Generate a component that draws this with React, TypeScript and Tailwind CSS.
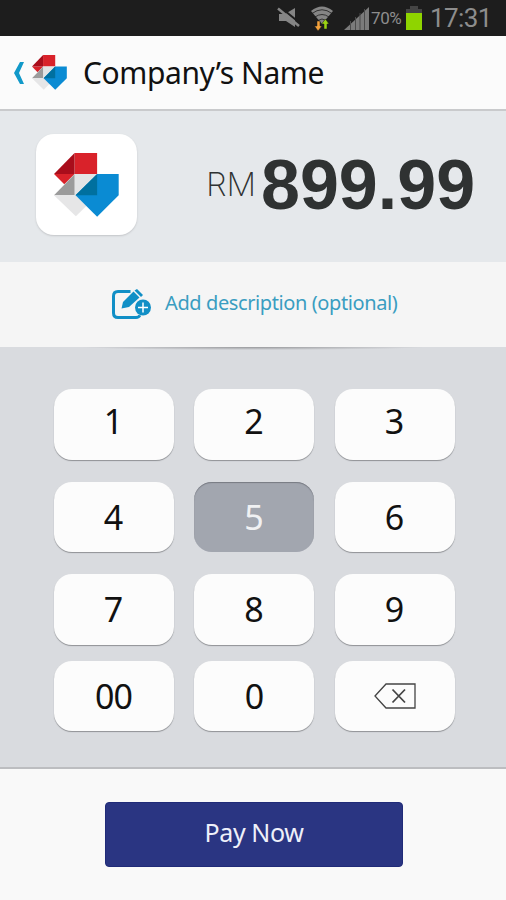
import React, { useState } from "react";

interface ILogo {
  className: string;
}

interface IKey {
  label: string;
  icon?: boolean;
}

const rows: IKey[][] = [
  [{ label: "1" }, { label: "2" }, { label: "3" }],
  [{ label: "4" }, { label: "5" }, { label: "6" }],
  [{ label: "7" }, { label: "8" }, { label: "9" }],
  [{ label: "00" }, { label: "0" }, { label: "delete", icon: true }],
];

function Logo({ className }: ILogo) {
  return (
    <svg viewBox="0 0 196 192" className={className} preserveAspectRatio="none">
      <path d="M62 0H130V63H62z" fill="#d9222a" />
      <path d="M0 63H62L31 94z" fill="#d9222a" />
      <path d="M0 63L62 0V63z" fill="#a90d1b" />
      <path d="M62 63H130V127H62z" fill="#e3e4e5" />
      <path d="M62 64V127H0z" fill="#9b9b9b" />
      <path d="M0 127H66L98 158L66 190z" fill="#e6e6e7" />
      <path d="M130 63H195V127L130 191L65 127z" fill="#0a8bd3" />
      <path d="M130 63V127H65z" fill="#00709f" />
    </svg>
  );
}

function StatusBar() {
  return (
    <div className="flex h-9 items-center bg-[#1d1d1d] pl-[277px] text-[#8d8d8d]">
      <svg width="24" height="24" viewBox="0 0 24 24" fill="#858585">
        <path d="M2 8H8L18 2V21L9 15H2z" />
        <path d="M2 0L24 18" stroke="#1d1d1d" strokeWidth="2" />
        <path d="M1 2.500L22 20" stroke="#858585" strokeWidth="2.500" />
      </svg>
      <svg width="24" height="28" viewBox="0 0 24 28" className="ml-[9px]" fill="none">
        <path d="M1 7Q12 -2 23 7L12 20z" fill="#858585" />
        <path d="M2 9.5Q12 2 22 9.5M5 13Q12 8 19 13M8 16.500Q12 13.500 16 16.500" stroke="#1d1d1d" strokeWidth=".8" />
        <path d="M7 17H10V22H12L8 27L4.500 22H7z" fill="#f3a13b" stroke="#1d1d1d" strokeWidth=".5" />
        <path d="M14 25V20H11.500L15.500 15L19 20H17V25z" fill="#9bd312" stroke="#1d1d1d" strokeWidth=".5" />
      </svg>
      <svg width="25" height="23" viewBox="0 0 25 23" className="ml-[10px]">
        <path d="M0 23L25 0V23z" fill="#7b7b7b" />
        <path d="M6.500 14V23M11.500 10V23M16 6V23M20.500 2V23" stroke="#4b4b4b" strokeWidth="1" />
      </svg>
      <span className="ml-[2px] w-[32px] font-['Roboto',sans-serif] text-[17px] leading-9 tracking-[-0.4px]">70%</span>
      <svg width="18" height="26" viewBox="0 0 18 26" className="ml-[2px]">
        <path d="M5 1H13V4H17V9H1V4H5z" fill="#454545" />
        <path d="M1 8H17V25H1z" fill="#8fd400" />
      </svg>
      <span className="ml-[7px] whitespace-nowrap font-['Roboto',sans-serif] text-[26px] leading-9 tracking-[-0.6px]">17:31</span>
    </div>
  );
}

function App() {
  const [pressed, set_pressed] = useState<string>("5");

  return (
    <div className="flex h-[900px] w-[506px] flex-col overflow-hidden bg-[#f9f9f9] font-['Noto_Sans',sans-serif]">
      <StatusBar />
      <header className="flex h-[75px] items-center border-b-2 border-[#c9cacc] bg-[#fbfbfb] pl-[14px]">
        <svg width="11" height="22" viewBox="0 0 11 22">
          <path d="M6 0H10L5 11L10 22H6L0 11z" fill="#1199c9" />
        </svg>
        <Logo className="ml-[7px] h-[35px] w-[35px]" />
        <h1 className="ml-[16px] whitespace-nowrap text-[30px] leading-none tracking-[-0.4px] text-[#111]">Company’s Name</h1>
      </header>
      <section className="flex h-[151px] items-center bg-[#e5e8eb] pb-[4px] pl-9">
        <div className="flex h-[101px] w-[101px] shrink-0 items-center justify-center rounded-[18px] bg-white shadow-[0_1px_2px_#c3c5c8]">
          <Logo className="h-[64px] w-[65px]" />
        </div>
        <div className="ml-[69px] flex items-center whitespace-nowrap text-[#2f3232]">
          <span className="w-[55px] font-['Inter','Liberation_Sans',sans-serif] text-[33px] font-extralight leading-none">RM</span>
          <span className="font-['Liberation_Sans',sans-serif] text-[70px] font-bold leading-none">899.99</span>
        </div>
      </section>
      <section className="flex h-[85px] items-center bg-[#f5f5f5] pl-[112px]">
        <svg width="39" height="31" viewBox="0 0 39 31" fill="none">
          <path d="M18.500 2.500H6Q1.500 2.500 1.500 7V24Q1.500 28.500 6 28.500H24Q27 28.500 28 26" stroke="#118fc6" strokeWidth="3" />
          <path d="M9.500 19.500L11 13L21.500 2.500L27.500 8.500L17 18z" fill="#118fc6" />
          <path d="M22.500 1.500L25 0L31 6L29 8z" fill="#118fc6" />
          <circle cx="31" cy="18.500" r="8.500" fill="#f5f5f5" />
          <circle cx="31" cy="18.500" r="8" fill="#118fc6" />
          <path d="M26 18.500H36M31 13.500V23.500" stroke="#fff" strokeWidth="1.500" />
        </svg>
        <span className="ml-[14px] whitespace-nowrap pb-[4px] text-xl leading-none tracking-[-0.4px] text-[#3a9dc1]">Add description (optional)</span>
      </section>
      <main className="h-[422px] border-b-2 border-[#bcbdc0] bg-[#d9dbdf]">
        <div className="mx-auto h-[3px] w-[340px] bg-[radial-gradient(ellipse_at_top,#97989b,#d9dbdf_72%)]" />
        <div className="ml-[53.5px] mt-[39px] flex flex-col gap-[22px]">
          {rows.map((row, i) => (
            <div
              key={i}
              className={i === 3 ? "-mt-[6px] flex gap-[20.5px] tracking-[-1px]" : i === 0 ? "flex gap-[20.5px] *:pb-[6px]" : "flex gap-[20.5px]"}
            >
              {row.map((key) => (
                <button
                  key={key.label}
                  onClick={() => set_pressed(key.label)}
                  className={
                    pressed === key.label
                      ? "flex h-[70.5px] w-[120px] items-center justify-center rounded-[18px] bg-[#a2a6af] text-[34px] leading-none text-[#f0f1f3] shadow-[inset_0_1px_1px_#777a82]"
                      : "flex h-[70.5px] w-[120px] items-center justify-center rounded-[18px] bg-[#fcfcfc] text-[34px] leading-none text-[#111] shadow-[0_1px_1px_#8f9195]"
                  }
                >
                  {key.icon ? (
                    <svg width="42" height="26" viewBox="0 0 42 26" fill="none" stroke="#444" strokeWidth="1.300">
                      <path d="M1 13L12 1H41V25H12z" />
                      <path d="M18.500 6.500L31 19.500M31 6.500L18.500 19.500" strokeWidth="1.800" />
                    </svg>
                  ) : (
                    key.label
                  )}
                </button>
              ))}
            </div>
          ))}
        </div>
      </main>
      <footer className="flex flex-1 justify-center bg-[#f9f9f9] pl-[2px] pt-[33px]">
        <button className="h-[65px] w-[298px] rounded-[4px] border border-[#202b78] bg-[#2a3582] pb-[4px] text-[25px] leading-none tracking-[-0.4px] text-[#eef0fa]">
          Pay Now
        </button>
      </footer>
    </div>
  );
}

export default App;
